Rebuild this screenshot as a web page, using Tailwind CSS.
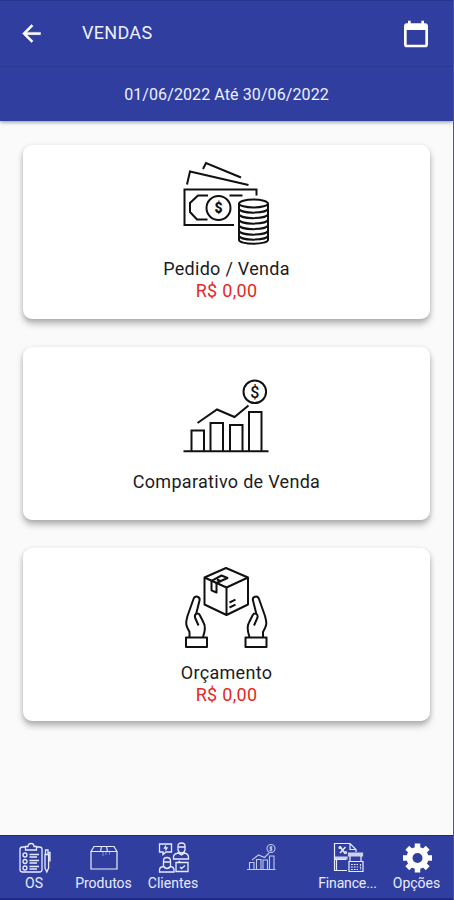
<!DOCTYPE html>
<html lang="pt-BR">
<head>
    <meta charset="UTF-8">
    <meta name="viewport" content="width=device-width, initial-scale=1.0">
    <title>Vendas</title>
    <script src="https://cdn.jsdelivr.net/npm/@tailwindcss/browser@4"></script>
</head>
<body class="bg-[#fafafa] font-['Roboto',sans-serif]">

<div class="flex flex-col h-[900px] w-[454px] overflow-hidden border-r border-[#55586a]">
    <header class="relative shrink-0 bg-[#303f9f] text-[#eef0ff] border-t border-[#27368f] shadow-[0_1px_4px_rgba(0,0,0,0.45)]">
        <div class="flex items-center h-[66px] pl-[18px] pr-[21px] border-b border-[#2a3892]">
            <svg class="w-[27px] h-[27px]" viewBox="0 0 24 24" fill="#fff"><path d="M20 11H7.83l5.59-5.59L12 4l-8 8 8 8 1.41-1.41L7.83 13H20v-2z" stroke="#fff" stroke-width=".4"/></svg>
            <h1 class="ml-[37px] -mt-px text-[18px] leading-6 tracking-[0.300px]">VENDAS</h1>
            <svg class="ml-auto w-[32px] h-[32px]" viewBox="0 0 24 24" fill="#fff"><path d="M19 4h-1V2h-2v2H8V2H6v2H5c-1.110 0-2 .9-2 2v14c0 1.100.890 2 2 2h14c1.100 0 2-.9 2-2V6c0-1.100-.9-2-2-2zm0 16H5V9h14v11z"/></svg>
        </div>
        <p class="h-[54px] flex items-center justify-center pt-px text-[16px] tracking-[0.100px]">01/06/2022 Até 30/06/2022</p>
    </header>

    <main class="flex-1 flex flex-col gap-[28px] pt-[24px] px-[23px] text-center text-[18px] leading-[22px] text-[#1c1c1c]">
        <section class="h-[174px] shrink-0 rounded-[9px] bg-white pt-[15px] shadow-[0_5px_6px_rgba(0,0,0,0.25),0_1px_5px_rgba(0,0,0,0.12)]">
            <!-- Bank notes and coins -->
            <svg class="mx-auto w-[94px] h-[88px]" viewBox="180 160 94 88" fill="none" stroke="#111" stroke-width="2">
                <path d="M234 225H184.500V189.500H256.500V195.500M187 184.500l3-13 58.500 13.500M203 169l3-6 35 14.500"/>
                <path d="M208 195.500h-10l-8 7.500v9l7 7.500h10.500M229.500 195.500H242.500"/>
                <circle cx="218.500" cy="208" r="12"/>
                <text x="218.500" y="213" text-anchor="middle" font-size="14" font-weight="900" fill="#111" stroke="none">$</text>
                <ellipse cx="253.500" cy="203.500" rx="14.500" ry="4"/>
                <path d="M239 203.500V240c0 2 6.500 3.800 14.500 3.800S268 242 268 240V203.500"/>
                <path d="M239 208.500c1 5.500 28 5.500 29 0M239 214c1 5.500 28 5.500 29 0M239 219.500c1 5.500 28 5.500 29 0M239 225c1 5.500 28 5.500 29 0M239 230.500c1 5.500 28 5.500 29 0M239 235.500c1 5.500 28 5.500 29 0"/>
            </svg>
            <h2 class="mt-[10px] tracking-[0.280px]">Pedido / Venda</h2>
            <p class="tracking-[0.300px] text-[#e5281f]">R$ 0,00</p>
        </section>

        <section class="h-[173px] shrink-0 rounded-[9px] bg-white pt-[27px] shadow-[0_5px_6px_rgba(0,0,0,0.25),0_1px_5px_rgba(0,0,0,0.12)]">
            <!-- Growth chart -->
            <svg class="mx-auto w-[94px] h-[86px]" viewBox="180 374 94 86" fill="none" stroke="#111" stroke-width="2">
                <path d="M183.500 451.200H268.500"/>
                <path d="M191.500 451V430.500h12.500V451M210.500 451V423h12.500v28M230 451v-26h12.500v26M249 451V412h12.500v39"/>
                <path d="M197.500 423l19.500-13.500 17.500 7.500 14-11.500"/>
                <circle cx="254.800" cy="391.800" r="11.300"/>
                <text x="254.800" y="397.500" text-anchor="middle" font-size="16" font-weight="500" fill="#111" stroke="none">$</text>
            </svg>
            <h2 class="mt-[11px] tracking-[0.300px]">Comparativo de Venda</h2>
        </section>

        <section class="h-[173px] shrink-0 rounded-[9px] bg-white pt-[15px] shadow-[0_5px_6px_rgba(0,0,0,0.25),0_1px_5px_rgba(0,0,0,0.12)]">
            <!-- Hands around a box -->
            <svg class="mx-auto w-[94px] h-[88px]" viewBox="180 563 94 88" fill="none" stroke="#111" stroke-width="2" stroke-linejoin="round">
                <path d="M226 568l22 9.500v27L226.500 615 204.500 604.500v-27zM204.500 577.500l22 10 21.500-10M226.500 587.500V615"/>
                <path d="M211.500 580.800v9.500l5 2.200v-9.500l11-5-6-2.500zM217 579.500l4.500 2M229.500 602.500l6-2.800M229.500 607.500l6-2.800"/>
                <g id="hand">
                    <path d="M186 637.500h21v9.500h-21zM189.500 637v-5c-4-7-4-9-2-16l6-17c1.500-4 7-2.500 6 1.500l-3.500 14M198.500 625.500l-3.500-8c-.8-4.500 3.500-5 5-2l3.500 7c2 3.500 1.500 9-.5 14.500"/>
                </g>
                <use href="#hand" transform="matrix(-1 0 0 1 452.500 0)"/>
            </svg>
            <h2 class="mt-[11px] tracking-[0.300px]">Orçamento</h2>
            <p class="tracking-[0.300px] text-[#e5281f]">R$ 0,00</p>
        </section>
    </main>

    <nav class="relative shrink-0 h-[65px] border-t border-b-2 border-[#1c2a85] bg-[#303f9f] text-[#e8ebff] text-[14px] leading-[18px] text-center grid grid-cols-[68px_71px_68px_108px_65px_73px]">
        <div class="flex flex-col items-center pt-[6px]">
            <svg class="w-[34px] h-[32px] shrink-0" viewBox="0 0 34 32" fill="none" stroke="currentColor" stroke-width="1.300">
                <path d="M9 5H5.500Q3 5 3 7.500v20Q3 30 5.500 30h17q2.500 0 2.500-2.500v-20Q25 5 22.500 5H19M8.500 8V4.500H11Q11 1.500 14 1.500t3 3h2.500V8zM12.500 12.500H22M12.500 15H20M12.500 18.500H22M12.500 21H20M12.500 24.500H22M12.500 27H20"/>
                <circle cx="8" cy="13" r="2"/><circle cx="8" cy="19.500" r="2"/><circle cx="8" cy="26" r="2"/>
                <path d="M28 12.500V26l1.800 4 1.800-4V12.500zM28.500 12V8h2.500v4M31.500 10.500h1.500v9"/>
            </svg>
            <span>OS</span>
        </div>
        <div class="flex flex-col items-center pt-[6px]">
            <svg class="w-[34px] h-[32px] shrink-0" viewBox="0 0 34 32" fill="none" stroke="currentColor" stroke-width="1.200">
                <path d="M4 9.500h26V27H4zM4 9.500l3-5h20l3 5M14.500 4.500l-1 5M19.500 4.500l1 5"/>
                <path d="M16 10v4M19 10v3M22.500 10v2.500" stroke-width=".7" opacity=".7"/>
            </svg>
            <span>Produtos</span>
        </div>
        <div class="flex flex-col items-center pt-[6px]">
            <svg class="w-[34px] h-[32px] shrink-0" viewBox="0 0 34 32" fill="none" stroke="currentColor" stroke-width="1.300">
                <path d="M3.500 2h12v8H10l-3 2.500V10H3.500zM10 3.500L8.500 6h2.500L9.500 8.500M20 20.500h12v9H20zM22 20.500l2-1.500M24 25l1.500 1.500 3.500-3"/>
                <path d="M22 8V4q0-3 3.500-3T29 4v4q-1 3-3.500 3T22 8zM22 5h7M17.500 17v-2q0-3 4.500-4l3.500 2 3-2q4 1 4 4v2zM7.500 24v-5q0-3.500 3.500-3.500t3.500 3.500v5q-1 2.500-3.500 2.500T7.500 24zM7.500 20h7M3.500 30v-2q0-3 4-3.500l3.500 2 3.500-2q3.500.5 3.500 3.500v2z"/>
            </svg>
            <span>Clientes</span>
        </div>
        <div class="flex flex-col items-center pt-[6px]">
            <svg class="w-[34px] h-[32px] shrink-0" viewBox="0 0 34 32" fill="none" stroke="currentColor" stroke-width="1.100" opacity=".8">
                <path d="M3 27.500h28.500M5.500 27v-6.500h4.500V27M12.500 27v-9.500H17V27M19 27v-9h4.500v9M25.500 27V14H30v13M8 18l6.500-5 6 2.500L25 11"/>
                <circle cx="27" cy="6.500" r="4"/>
                <path d="M28.500 5h-2q-1 1 0 1.500l1 .3q1 1-.2 1.500h-2M27 4v5.500"/>
            </svg>
        </div>
        <div class="flex flex-col items-center pt-[6px]">
            <svg class="w-[34px] h-[32px] shrink-0" viewBox="0 0 34 32" fill="none" stroke="currentColor" stroke-width="1.200">
                <path d="M16 28.500H3.500V1.500H19l6 6V10M19 2v5.500h6M5.500 28V17M3.500 17.500H15"/>
                <path d="M9 4.500l5 7M14.500 5L9 11" stroke-width="1.500"/>
                <circle cx="9" cy="5.500" r="1"/><circle cx="14.500" cy="10.500" r="1"/>
                <path d="M4 15h12v2H4zM17.500 11h14v3h-14z" fill="currentColor" opacity=".85"/>
                <path d="M19 14v5.500h11V14M18 19.500h14v10H18z"/>
                <path d="M20 22.500h7M20 25h7M20 27.500h7M29.500 22v6" stroke-dasharray="1.800 1"/>
            </svg>
            <span class="tracking-[-0.150px]">Finance...</span>
        </div>
        <div class="flex flex-col items-center pt-[6px]">
            <svg class="w-[34px] h-[32px] shrink-0" viewBox="-17.500 -16 34 32">
                <path d="M0-14.500V-9M0 9v5.500M-14.500 0H-9M9 0h5.500M-10.200-10.200l3 3M7.200 7.200l3 3M-10.200 10.200l3-3M7.200-7.200l3-3" stroke="#fff" stroke-width="5.500"/>
                <circle r="8" fill="none" stroke="#fff" stroke-width="6"/>
            </svg>
            <span>Opções</span>
        </div>
    </nav>
</div>

</body>
</html>
